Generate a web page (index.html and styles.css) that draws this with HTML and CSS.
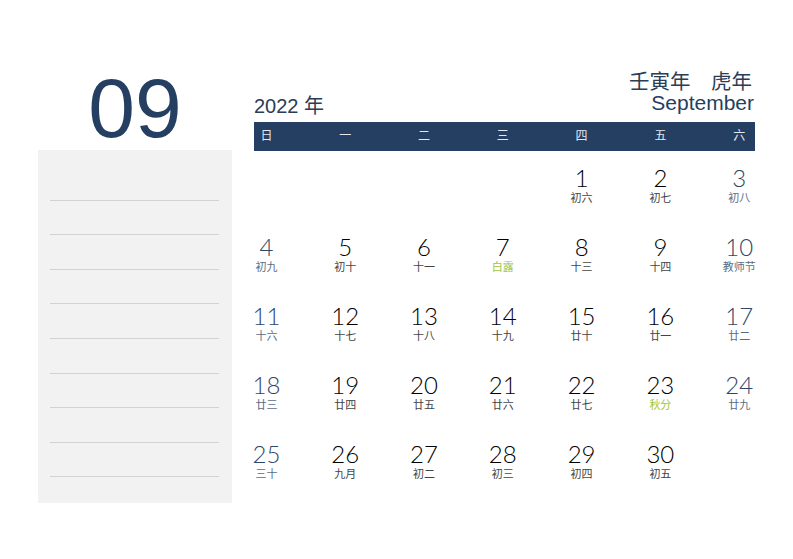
FILE: index.html
```html
<!DOCTYPE html>
<html lang="zh-CN">
<head>
  <meta charset="UTF-8">
  <title>2022年9月 日历</title>
  <link rel="stylesheet" href="styles.css">
</head>
<body>
  <div class="page">
    <div class="side">
      <div class="month-num">09</div>
      <div class="notes">
        <div class="note-line"></div>
        <div class="note-line"></div>
        <div class="note-line"></div>
        <div class="note-line"></div>
        <div class="note-line"></div>
        <div class="note-line"></div>
        <div class="note-line"></div>
        <div class="note-line"></div>
        <div class="note-line"></div>
      </div>
    </div>

    <div class="main">
      <div class="top">
        <div class="year">2022 年</div>
        <div class="month-info">
          <div class="ganzhi">壬寅年　虎年</div>
          <div class="month-en">September</div>
        </div>
      </div>

      <div class="week-bar">
        <div class="week-grid">
          <span>日</span><span>一</span><span>二</span><span>三</span><span>四</span><span>五</span><span>六</span>
        </div>
      </div>

      <div class="days">
        <div class="day"></div>
        <div class="day"></div>
        <div class="day"></div>
        <div class="day"></div>
        <div class="day"><div class="num">1</div><div class="lunar">初六</div></div>
        <div class="day"><div class="num">2</div><div class="lunar">初七</div></div>
        <div class="day weekend"><div class="num">3</div><div class="lunar">初八</div></div>

        <div class="day weekend"><div class="num">4</div><div class="lunar">初九</div></div>
        <div class="day"><div class="num">5</div><div class="lunar">初十</div></div>
        <div class="day"><div class="num">6</div><div class="lunar">十一</div></div>
        <div class="day"><div class="num">7</div><div class="lunar term">白露</div></div>
        <div class="day"><div class="num">8</div><div class="lunar">十三</div></div>
        <div class="day"><div class="num">9</div><div class="lunar">十四</div></div>
        <div class="day weekend"><div class="num">10</div><div class="lunar">教师节</div></div>

        <div class="day weekend"><div class="num">11</div><div class="lunar">十六</div></div>
        <div class="day"><div class="num">12</div><div class="lunar">十七</div></div>
        <div class="day"><div class="num">13</div><div class="lunar">十八</div></div>
        <div class="day"><div class="num">14</div><div class="lunar">十九</div></div>
        <div class="day"><div class="num">15</div><div class="lunar">廿十</div></div>
        <div class="day"><div class="num">16</div><div class="lunar">廿一</div></div>
        <div class="day weekend"><div class="num">17</div><div class="lunar">廿二</div></div>

        <div class="day weekend"><div class="num">18</div><div class="lunar">廿三</div></div>
        <div class="day"><div class="num">19</div><div class="lunar">廿四</div></div>
        <div class="day"><div class="num">20</div><div class="lunar">廿五</div></div>
        <div class="day"><div class="num">21</div><div class="lunar">廿六</div></div>
        <div class="day"><div class="num">22</div><div class="lunar">廿七</div></div>
        <div class="day"><div class="num">23</div><div class="lunar term">秋分</div></div>
        <div class="day weekend"><div class="num">24</div><div class="lunar">廿九</div></div>

        <div class="day weekend"><div class="num">25</div><div class="lunar">三十</div></div>
        <div class="day"><div class="num">26</div><div class="lunar">九月</div></div>
        <div class="day"><div class="num">27</div><div class="lunar">初二</div></div>
        <div class="day"><div class="num">28</div><div class="lunar">初三</div></div>
        <div class="day"><div class="num">29</div><div class="lunar">初四</div></div>
        <div class="day"><div class="num">30</div><div class="lunar">初五</div></div>
        <div class="day"></div>
      </div>
    </div>
  </div>
</body>
</html>
```

FILE: styles.css
```css
* {
  margin: 0;
  padding: 0;
  box-sizing: border-box;
}
body {
  background: #fff;
  font-family: "Liberation Sans", "Noto Sans CJK SC", sans-serif;
  color: #222;
}
.page {
  display: flex;
  gap: 22px;
  padding: 60px 0 0 38px;
}

/* 左侧：月份 + 备注 */
.side {
  width: 194px;
}
.month-num {
  height: 90px;
  font-size: 84px;
  line-height: 84px;
  padding-top: 6px;
  text-align: center;
  color: #243f61;
}
.notes {
  height: 353px;
  background: #f2f2f2;
  padding: 16px 13px 0 12px;
}
.note-line {
  height: 34.6px;
  border-bottom: 1px solid #d2d2d2;
}

/* 右侧：日历 */
.main {
  width: 501px;
}
.top {
  height: 62px;
  display: flex;
  justify-content: space-between;
  align-items: flex-end;
}
.year {
  font-size: 20px;
  line-height: 20px;
  color: #2b3d55;
  margin-bottom: 6px;
}
.month-info {
  text-align: right;
  color: #243f61;
  margin-bottom: 8px;
}
.ganzhi {
  font-size: 20.5px;
  line-height: 20px;
  padding-right: 3px;
  color: #2b3d55;
}
.month-en {
  font-size: 21px;
  line-height: 22px;
  padding-right: 1px;
}
.week-bar {
  height: 29px;
  background: #243f61;
}
.week-grid,
.days {
  display: grid;
  grid-template-columns: repeat(7, 78.8px);
  margin: 0 -23px 0 -27px;
}
.week-grid span {
  text-align: center;
  font-size: 12px;
  line-height: 29px;
  color: #e4e8ee;
}
.day {
  height: 69px;
  padding-top: 15px;
  text-align: center;
}
.num {
  font-family: Lato, "Liberation Sans", sans-serif;
  font-weight: 300;
  font-size: 24px;
  line-height: 24px;
  color: #000;
}
.lunar {
  margin-top: 1px;
  font-size: 11px;
  line-height: 14px;
  color: #444;
}
.weekend .num {
  color: #2f4869;
}
.weekend .lunar {
  color: #5a6d86;
}
.lunar.term {
  color: #9dc43a;
}
```
